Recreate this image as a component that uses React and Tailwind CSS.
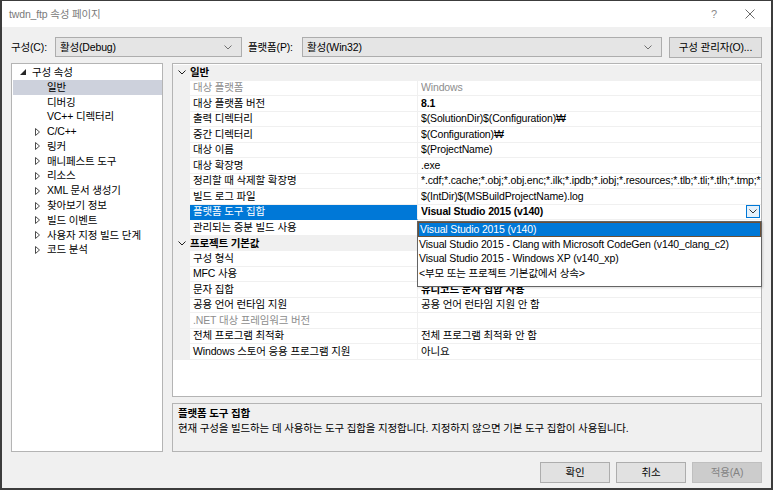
import React from "react";

const generalRows = [
  { name: "대상 플랫폼", value: "Windows", dim: true },
  { name: "대상 플랫폼 버전", value: "8.1", bold: true },
  { name: "출력 디렉터리", value: "$(SolutionDir)$(Configuration)₩" },
  { name: "중간 디렉터리", value: "$(Configuration)₩" },
  { name: "대상 이름", value: "$(ProjectName)" },
  { name: "대상 확장명", value: ".exe" },
  {
    name: "정리할 때 삭제할 확장명",
    value:
      "*.cdf;*.cache;*.obj;*.obj.enc;*.ilk;*.ipdb;*.iobj;*.resources;*.tlb;*.tli;*.tlh;*.tmp;*.rs",
  },
  { name: "빌드 로그 파일", value: "$(IntDir)$(MSBuildProjectName).log" },
  { name: "플랫폼 도구 집합", value: "Visual Studio 2015 (v140)", bold: true, selected: true },
  // value sits under the open dropdown
  { name: "관리되는 증분 빌드 사용", value: "" },
];

const defaultRows = [
  { name: "구성 형식", value: "" },
  { name: "MFC 사용", value: "" },
  { name: "문자 집합", value: "유니코드 문자 집합 사용", bold: true },
  { name: "공용 언어 런타임 지원", value: "공용 언어 런타임 지원 안 함" },
  { name: ".NET 대상 프레임워크 버전", value: "", dim: true },
  { name: "전체 프로그램 최적화", value: "전체 프로그램 최적화 안 함" },
  { name: "Windows 스토어 응용 프로그램 지원", value: "아니요" },
];

const treeItems = [
  { label: "일반", selected: true },
  { label: "디버깅" },
  { label: "VC++ 디렉터리" },
  { label: "C/C++", expandable: true },
  { label: "링커", expandable: true },
  { label: "매니페스트 도구", expandable: true },
  { label: "리소스", expandable: true },
  { label: "XML 문서 생성기", expandable: true },
  { label: "찾아보기 정보", expandable: true },
  { label: "빌드 이벤트", expandable: true },
  { label: "사용자 지정 빌드 단계", expandable: true },
  { label: "코드 분석", expandable: true },
];

const toolsets = [
  "Visual Studio 2015 (v140)",
  "Visual Studio 2015 - Clang with Microsoft CodeGen (v140_clang_c2)",
  "Visual Studio 2015 - Windows XP (v140_xp)",
  "<부모 또는 프로젝트 기본값에서 상속>",
];

const Chevron = ({ className = "", color = "#707070" }) => (
  <svg width="8" height="5" viewBox="0 0 8 5" className={className}>
    <polyline points="0.5,0.5 4,4 7.5,0.5" fill="none" stroke={color} strokeWidth="1" />
  </svg>
);

const ComboBox = ({ value, width }) => (
  <div
    className={`flex h-[20px] items-center justify-between border border-[#adadad] bg-[#e5e5e5] pl-[4px] pr-[9px] ${width}`}
  >
    <span>{value}</span>
    <Chevron />
  </div>
);

const CategoryRow = ({ label }) => (
  <div className="flex h-[15.5px] items-center bg-[#f0f0f0]">
    <div className="flex w-[17px] justify-center">
      <Chevron color="#1e1e1e" />
    </div>
    <span className="font-bold">{label}</span>
  </div>
);

const PropRow = ({ row }) => (
  <div className="flex h-[15.5px]">
    <div className="w-[17px] shrink-0 bg-[#f0f0f0]" />
    <div
      className={`flex w-[228px] shrink-0 items-center border-r border-b pl-[3px] whitespace-nowrap ${
        row.selected
          ? "border-b-[#0078d7] border-r-[#f0f0f0] bg-[#0078d7] text-white"
          : "border-[#f0f0f0] bg-white"
      } ${row.dim ? "text-[#8d8d8d]" : ""}`}
    >
      {row.name}
    </div>
    <div className="flex min-w-0 flex-1 items-center overflow-hidden border-b border-[#f0f0f0] bg-white pl-[3px] whitespace-nowrap">
      <span className={`flex-1 overflow-hidden ${row.bold ? "font-bold" : ""} ${row.dim ? "text-[#8d8d8d]" : ""}`}>
        {row.value}
      </span>
      {row.selected && (
        <div className="mr-[1px] flex h-[13px] w-[14px] shrink-0 items-center justify-center border border-[#0078d7] bg-[#e5f1fb]">
          <Chevron color="#333" />
        </div>
      )}
    </div>
  </div>
);

const Button = ({ children, disabled }) => (
  <div
    className={`flex h-[21px] w-[70px] items-center justify-center border ${
      disabled ? "border-[#bfbfbf] bg-[#cccccc] text-[#838383]" : "border-[#adadad] bg-[#e1e1e1]"
    }`}
  >
    {children}
  </div>
);

export default function App() {
  return (
    <div className="flex h-[490px] w-[773px] flex-col border-2 border-t border-[#3c3c3c] bg-[#f0f0f0] font-['Liberation_Sans','Noto_Sans_CJK_KR',sans-serif] text-[10.5px] leading-[15px] tracking-[-0.15px] text-black">
      {/* title bar */}
      <div className="flex h-[26px] shrink-0 items-center bg-white pl-[7px] text-[10.5px] text-[#7a7a7a]">
        <span className="flex-1">twdn_ftp 속성 페이지</span>
        <span className="mr-[28px] text-[11px] text-[#8a8a8a]">?</span>
        <svg width="10" height="10" viewBox="0 0 10 10" className="mr-[16px]">
          <path d="M0.5 0.5 L9.5 9.5 M9.5 0.5 L0.5 9.5" stroke="#6a6a6a" strokeWidth="1" />
        </svg>
      </div>

      <div className="flex flex-1 flex-col px-[9px] pt-[10px]">
        {/* config row */}
        <div className="flex h-[20px] items-center">
          <span className="w-[44px]">구성(C):</span>
          <ComboBox value="활성(Debug)" width="w-[187px]" />
          <span className="ml-[6px] w-[54px]">플랫폼(P):</span>
          <ComboBox value="활성(Win32)" width="w-[360px]" />
          <div className="ml-[7px] flex h-[21px] flex-1 items-center justify-center border border-[#adadad] bg-[#e1e1e1]">
            구성 관리자(O)...
          </div>
        </div>

        {/* main */}
        <div className="mt-[6px] flex h-[389px] gap-[9px]">
          {/* tree */}
          <div className="w-[152px] shrink-0 border border-[#b4b4b4] bg-white pt-[1px] pl-[1px]">
            <div className="flex h-[14.8px] items-center">
              <svg width="6" height="6" viewBox="0 0 6 6" className="ml-[7px] mr-[6px]">
                <polygon points="6,0 6,6 0,6" fill="#262626" />
              </svg>
              <span>구성 속성</span>
            </div>
            {treeItems.map((item) => (
              <div
                key={item.label}
                className={`flex h-[14.8px] items-center whitespace-nowrap ${item.selected ? "bg-[#cdd1dc]" : ""}`}
              >
                <div className="flex w-[34px] shrink-0 justify-end pr-[7px]">
                  {item.expandable && (
                    <svg width="5" height="8" viewBox="0 0 5 8">
                      <polygon points="0.5,0.5 4.5,4 0.5,7.5" fill="none" stroke="#4d4d4d" strokeWidth="1" />
                    </svg>
                  )}
                </div>
                <span>{item.label}</span>
              </div>
            ))}
          </div>

          {/* right side */}
          <div className="flex min-w-0 flex-1 flex-col gap-[6px]">
            <div className="relative h-[334px] border border-[#b4b4b4] bg-white pt-[1px]">
              <CategoryRow label="일반" />
              {generalRows.map((row) => (
                <PropRow key={row.name} row={row} />
              ))}
              <CategoryRow label="프로젝트 기본값" />
              {defaultRows.map((row) => (
                <PropRow key={row.name} row={row} />
              ))}

              {/* dropdown list */}
              <div className="absolute top-[157px] left-[244px] h-[66px] w-[345px] border border-[#646464] bg-white shadow-[1px_1px_2px_rgba(0,0,0,0.15)]">
                {toolsets.map((t, i) => (
                  <div
                    key={t}
                    className={`flex h-[14.7px] items-center pl-[1px] whitespace-nowrap ${
                      i === 0 ? "border border-[#6b4f36] bg-[#0078d7] text-white" : ""
                    }`}
                  >
                    {t}
                  </div>
                ))}
              </div>
            </div>

            {/* description */}
            <div className="h-[49px] border border-[#b4b4b4] bg-[#f0f0f0] px-[5px] pt-[2px]">
              <div className="font-bold">플랫폼 도구 집합</div>
              <div>현재 구성을 빌드하는 데 사용하는 도구 집합을 지정합니다. 지정하지 않으면 기본 도구 집합이 사용됩니다.</div>
            </div>
          </div>
        </div>

        {/* buttons */}
        <div className="mt-[10px] flex justify-end gap-[6px]">
          <Button>확인</Button>
          <Button>취소</Button>
          <Button disabled>적용(A)</Button>
        </div>
      </div>
    </div>
  );
}
